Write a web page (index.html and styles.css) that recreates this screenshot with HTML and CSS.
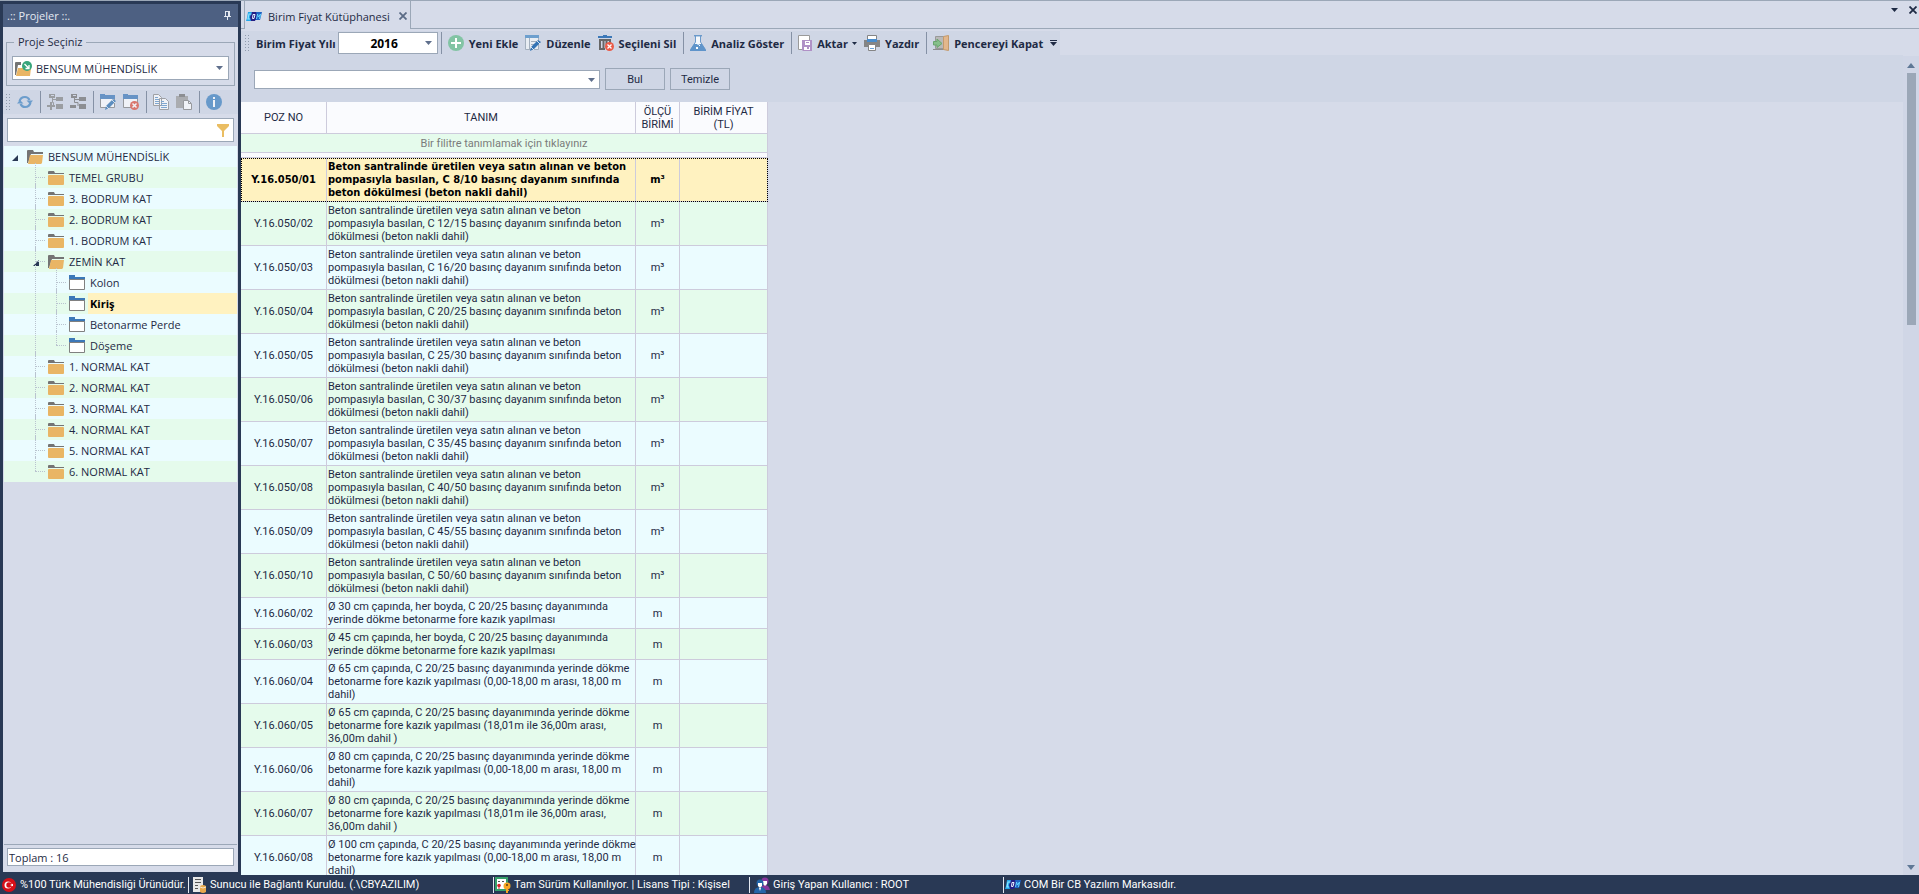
FILE: index.html
```html
<!DOCTYPE html>
<html lang="tr">
<head>
<meta charset="utf-8">
<title>Birim Fiyat Kütüphanesi</title>
<link rel="stylesheet" href="styles.css">
</head>
<body>
<svg class="defs" aria-hidden="true">
  <symbol id="folder" viewBox="0 0 16 14"><path fill="#747474" d="M0 1q0-1 1-1h5l1 2h9v1H0z"/><rect y="4" width="16" height="10" rx="1" fill="#e9b565"/></symbol>
  <symbol id="folder-open" viewBox="0 0 16 14"><path fill="#747474" d="M0 1q0-1 1-1h5l1 2h9v2H4L1 13H0z"/><path fill="#e9b565" d="M3 5h13l-1 8-1 1H1z"/></symbol>
  <symbol id="folder-blue" viewBox="0 0 16 15"><path fill="#3c78b8" d="M0 0h6v2h10v3H0z"/><path fill="#fff" stroke="#808080" d="M.5 4.500h15v10H.5z"/><path fill="#3c78b8" d="M0 2h16v2H0z"/></symbol>
  <symbol id="caret" viewBox="0 0 7 4"><path fill="currentColor" d="M0 0h7L3.500 4z"/></symbol>
  <symbol id="expanded" viewBox="0 0 6 6"><path fill="#293955" d="M6 0v6H0z"/></symbol>
  <symbol id="logo" viewBox="0 0 16 11"><path fill="#22a7ea" d="M2 1h5L5 10H0l1-3z"/><path fill="#1f63c4" d="M9 1h7l-2 8H8z"/><path fill="#241f86" d="M6 1h4l1 4-2 5H5L4 6z"/><path fill="none" stroke="#8fe6ff" stroke-width="1.200" d="M5.500 3H3L2 8h2"/><path fill="none" stroke="#e8f0ff" d="M7 3.500h2l-1 4H6.500z"/><path fill="none" stroke="#5fd4ff" d="M10.500 8l1-5 1 3 2-3-1 5"/></symbol>
</svg>
<div class="app">
  <aside class="sidebar">
    <header class="panel-title"><span>.:: Projeler ::.</span>
      <svg width="7" height="9" viewBox="0 0 7 9"><path fill="#e4e9f2" d="M1 0h5v5h1v1H4v3H3V6H0V5h1zM2 1v4h2V1z"/></svg>
    </header>
    <fieldset class="project-box">
      <legend><label for="project">Proje Seçiniz</label></legend>
      <div class="combo project-combo">
        <svg width="17" height="15" viewBox="0 0 17 15"><path fill="#747474" d="M0 2q0-1 1-1h5v3H3L1 14H0z"/><path fill="#e9b565" d="M3 7h13l-1 8H1z"/><circle cx="12" cy="5" r="5" fill="#38a57b"/><path fill="none" stroke="#fff" stroke-width="1.300" d="M9.500 3l4 4M14 4v3.500h-3.500"/></svg>
        <select id="project"><option>BENSUM MÜHENDİSLİK</option></select>
        <svg class="arrow" width="7" height="4"><use href="#caret"/></svg>
      </div>
    </fieldset>
    <div class="tree-tools">
      <i class="grip"></i>
      <button type="button" class="dim" aria-label="Yenile"><svg width="16" height="14" viewBox="0 0 16 14"><path fill="none" stroke="#4385c2" stroke-width="2.200" d="M2.500 6.500Q3.500 2 8 2q3 0 4.500 3M13.500 7.500Q12.500 12 8 12q-3 0-4.500-3"/><path fill="#4385c2" d="M9.500 5.500H16L13 9zM0 8.500h6.500L3 5z"/></svg></button>
      <i class="sep"></i>
      <button type="button" class="dim" aria-label="Alt grup ekle"><svg width="16" height="16" viewBox="0 0 16 16"><path fill="#858585" d="M2 0h6v4H2zM9 3h7v4H9zM9 10h7v5H9zM3 8h2v3h3v2H5v3H3v-3H0v-2h3z"/><path fill="none" stroke="#858585" d="M5.500 4v4.500h1V12M6 5.500h3"/><path fill="#cfd6e5" d="M4 1h3v1H4z"/></svg></button>
      <button type="button" class="dim" aria-label="Alt grup sil"><svg width="16" height="16" viewBox="0 0 16 16"><path fill="#707070" d="M1 0h6v4H1zM9 3h7v4H9zM9 10h7v5H9zM0 11h6v3H0z"/><path fill="none" stroke="#707070" d="M4.500 4v4.500H8V12M5 5.500h4"/><path fill="#cfd6e5" d="M3 1h3v1H3z"/></svg></button>
      <i class="sep"></i>
      <button type="button" class="dim" aria-label="Düzenle"><svg width="16" height="16" viewBox="0 0 16 16"><path fill="#fff" stroke="#808080" d="M.5 4.500h14v9H.5z"/><path fill="#3c78b8" d="M0 0h5v1h10v4H0z"/><path fill="#2d70b0" d="M5 16l1-4 7-7 3 2-7 7z"/><path stroke="#fff" stroke-width=".8" d="M12 6l3 3M6 12l3 3"/></svg></button>
      <button type="button" class="dim" aria-label="Sil"><svg width="16" height="16" viewBox="0 0 16 16"><path fill="#fff" stroke="#808080" d="M.5 4.500h14v9H.5z"/><path fill="#3c78b8" d="M0 0h5v1h10v4H0z"/><circle cx="11.500" cy="11.500" r="4.500" fill="#de4f3c"/><path stroke="#fff" stroke-width="1.500" d="M9.500 9.500l4 4m0-4l-4 4"/></svg></button>
      <i class="sep"></i>
      <button type="button" class="dim" aria-label="Kopyala"><svg width="16" height="16" viewBox="0 0 16 16"><path fill="#fff" stroke="#8a8a8a" d="M.5.500h5l3 3v8h-8zM6.500 4.500h6l3 3v8h-9z"/><path stroke="#5d93c6" d="M2 3.500h3M2 5.500h4M2 7.500h4M2 9.500h4M8 7.500h3M8 9.500h6M8 11.500h6M8 13.500h6"/></svg></button>
      <button type="button" class="dim" aria-label="Yapıştır"><svg width="16" height="16" viewBox="0 0 16 16"><path fill="#9b9b9b" d="M0 2h12v12H0z"/><path fill="#707070" d="M3 0h6v3H3z"/><path fill="#fff" stroke="#808080" d="M7.500 6.500h5l3 3v6h-8z"/><path fill="none" stroke="#808080" d="M12.500 7v2.500H15"/></svg></button>
      <i class="sep"></i>
      <button type="button" class="dim" aria-label="Bilgi"><svg width="16" height="16" viewBox="0 0 16 16"><circle cx="8" cy="8" r="8" fill="#3c80bf"/><path fill="#fff" d="M7 3h2v2H7zM7 6h2v7H7z"/></svg></button>
    </div>
    <div class="combo search"><input type="text" aria-label="Ara">
      <svg width="12" height="13" viewBox="0 0 12 13"><path fill="#eabd62" d="M0 0h12v2L7 7v6H5V7L0 2z"/></svg></div>
    <ul class="tree">
      <li><div class="node"><svg class="exp" width="6" height="6"><use href="#expanded"/></svg><svg width="16" height="14"><use href="#folder-open"/></svg><span>BENSUM MÜHENDİSLİK</span></div>
      <ul>
        <li><div class="node"><svg width="16" height="14"><use href="#folder"/></svg><span>TEMEL GRUBU</span></div></li>
        <li><div class="node"><svg width="16" height="14"><use href="#folder"/></svg><span>3. BODRUM KAT</span></div></li>
        <li><div class="node"><svg width="16" height="14"><use href="#folder"/></svg><span>2. BODRUM KAT</span></div></li>
        <li><div class="node"><svg width="16" height="14"><use href="#folder"/></svg><span>1. BODRUM KAT</span></div></li>
        <li><div class="node"><svg class="exp" width="6" height="6"><use href="#expanded"/></svg><svg width="16" height="14"><use href="#folder-open"/></svg><span>ZEMİN KAT</span></div>
        <ul>
          <li><div class="node"><svg width="16" height="15"><use href="#folder-blue"/></svg><span>Kolon</span></div></li>
          <li><div class="node"><svg width="16" height="15"><use href="#folder-blue"/></svg><span class="current">Kiriş</span></div></li>
          <li><div class="node"><svg width="16" height="15"><use href="#folder-blue"/></svg><span>Betonarme Perde</span></div></li>
          <li><div class="node"><svg width="16" height="15"><use href="#folder-blue"/></svg><span>Döşeme</span></div></li>
        </ul></li>
        <li><div class="node"><svg width="16" height="14"><use href="#folder"/></svg><span>1. NORMAL KAT</span></div></li>
        <li><div class="node"><svg width="16" height="14"><use href="#folder"/></svg><span>2. NORMAL KAT</span></div></li>
        <li><div class="node"><svg width="16" height="14"><use href="#folder"/></svg><span>3. NORMAL KAT</span></div></li>
        <li><div class="node"><svg width="16" height="14"><use href="#folder"/></svg><span>4. NORMAL KAT</span></div></li>
        <li><div class="node"><svg width="16" height="14"><use href="#folder"/></svg><span>5. NORMAL KAT</span></div></li>
        <li><div class="node"><svg width="16" height="14"><use href="#folder"/></svg><span>6. NORMAL KAT</span></div></li>
      </ul></li>
    </ul>
    <div class="total"><input type="text" readonly value="Toplam : 16" aria-label="Toplam"></div>
  </aside>

  <main class="main">
    <div class="tabs">
      <div class="tab"><svg width="16" height="11"><use href="#logo"/></svg><span>Birim Fiyat Kütüphanesi</span>
        <button type="button" aria-label="Sekmeyi kapat"><svg width="8" height="8" viewBox="0 0 8 8"><path stroke="#5b6b86" stroke-width="1.800" d="M.5.500l7 7m0-7l-7 7"/></svg></button></div>
      <div class="tab-tools">
        <button type="button" aria-label="Sekmeler"><svg width="7" height="4"><use href="#caret"/></svg></button>
        <button type="button" aria-label="Kapat"><svg width="8" height="8" viewBox="0 0 8 8"><path stroke="currentColor" stroke-width="1.800" d="M.5.500l7 7m0-7l-7 7"/></svg></button>
      </div>
    </div>
    <div class="workspace">
      <div class="content">
        <div class="toolbar">
          <i class="grip"></i>
          <label for="year">Birim Fiyat Yılı</label>
          <div class="combo year"><select id="year"><option>2016</option></select><svg class="arrow" width="7" height="4"><use href="#caret"/></svg></div>
          <i class="sep"></i>
          <button type="button"><svg width="16" height="16" viewBox="0 0 16 16"><circle cx="8" cy="8" r="8" fill="#82c4a4"/><path fill="#fff" d="M7 3h2v4h4v2H9v4H7V9H3V7h4z"/></svg>Yeni Ekle</button>
          <button type="button"><svg width="16" height="16" viewBox="0 0 16 16"><path fill="#e8edf3" stroke="#a3afbd" d="M.5.500h13v14H.5z"/><path fill="#6d9fce" d="M0 0h14v3H0z"/><path stroke="#a3afbd" d="M4.500 3v11M6 6.500h7M6 9.500h4"/><path fill="#3474b5" d="M5 16l1-4 7-7 3 2-7 7z"/><path stroke="#fff" stroke-width=".8" d="M12 6l3 3M6 12l3 3"/></svg>Düzenle</button>
          <button type="button"><svg width="16" height="16" viewBox="0 0 16 16"><path fill="#3c78b8" d="M5 0h4v1h5v2H0V1h5z"/><path fill="none" stroke="#666" stroke-width="2" d="M12 8V5H2v9h5M5.500 6v7M8.500 6v4"/><circle cx="11.500" cy="11.500" r="4.500" fill="#ea5a46"/><path stroke="#fff" stroke-width="1.300" d="M9.500 9.500l4 4m0-4l-4 4"/></svg>Seçileni Sil</button>
          <i class="sep"></i>
          <button type="button"><svg width="16" height="16" viewBox="0 0 16 16"><path fill="#f5f8fc" stroke="#6b9acb" d="M5.500 1v6L1 14v1.500h14V14l-4.500-7V1"/><path stroke="#6b9acb" stroke-width="1.500" d="M4 .7h8"/><path fill="#5f94ca" d="M4 9h3l1 1 2-1h2l4 6v1H0v-1z"/><path fill="#fff" d="M6 12h2v2H6zM9 10h1v1H9z"/></svg>Analiz Göster</button>
          <i class="sep"></i>
          <button type="button"><svg width="14" height="16" viewBox="0 0 14 16"><path fill="#fff" stroke="#9a9a9a" d="M.5.500h11v14H.5z"/><path fill="#b091c6" d="M4 5h10v11H5l-1-1z"/><path fill="#fff" d="M7 6h5v4H7zM6 12h6v3H6z"/><path fill="#b091c6" d="M8 7h3v1H8zM9 12h2v2H9z"/></svg>Aktar<svg class="mini" width="5" height="3"><use href="#caret"/></svg></button>
          <button type="button"><svg width="16" height="16" viewBox="0 0 16 16"><path fill="#fff" stroke="#858585" d="M3.500.500h9v6h-9z"/><path fill="#858585" d="M0 5h16v7H0z"/><path fill="#4a8ccb" d="M3 4h10v3H3z"/><path fill="#fff" stroke="#858585" d="M4.500 9.500h7v6h-7z"/><path stroke="#6ba3d8" d="M6 13.500h4"/></svg>Yazdır</button>
          <i class="sep"></i>
          <button type="button"><svg width="16" height="16" viewBox="0 0 16 16"><path fill="#b9b9b9" stroke="#999" d="M2.500 1.500h8v12h-8z"/><path fill="#8d8d8d" d="M0 14h11v1H0z"/><path fill="#e3b78c" stroke="#c39a6c" d="M10.500 1.500l5-1v15l-5-1z"/><path fill="#86c08a" stroke="#6aa56e" d="M.5 6.500H4V4l5 4.500-5 4v-2.500H.5z"/></svg>Pencereyi Kapat</button>
          <button type="button" class="more" aria-label="Diğer"><svg width="7" height="6" viewBox="0 0 7 6"><path fill="currentColor" d="M0 0h7v1H0zM0 2h7L3.500 6z"/></svg></button>
        </div>
        <form class="finder">
          <div class="combo find"><input type="text" aria-label="Aranacak metin"><svg class="arrow" width="7" height="4"><use href="#caret"/></svg></div>
          <button type="button">Bul</button>
          <button type="button">Temizle</button>
        </form>
        <div class="grid-area">
        <table class="grid">
          <colgroup><col class="c-no"><col class="c-desc"><col class="c-unit"><col class="c-price"></colgroup>
          <thead>
            <tr><th>POZ NO</th><th>TANIM</th><th>ÖLÇÜ<br>BİRİMİ</th><th>BİRİM FİYAT<br>(TL)</th></tr>
            <tr class="filter"><td colspan="4">Bir filitre tanımlamak için tıklayınız</td></tr>
            <tr class="gap"><td colspan="4"></td></tr>
          </thead>
          <tbody>
            <tr class="selected"><td>Y.16.050/01</td><td>Beton santralinde üretilen veya satın alınan ve beton<br>pompasıyla basılan, C 8/10 basınç dayanım sınıfında<br>beton dökülmesi (beton nakli dahil)</td><td>m³</td><td></td></tr>
            <tr><td>Y.16.050/02</td><td>Beton santralinde üretilen veya satın alınan ve beton<br>pompasıyla basılan, C 12/15 basınç dayanım sınıfında beton<br>dökülmesi (beton nakli dahil)</td><td>m³</td><td></td></tr>
            <tr><td>Y.16.050/03</td><td>Beton santralinde üretilen veya satın alınan ve beton<br>pompasıyla basılan, C 16/20 basınç dayanım sınıfında beton<br>dökülmesi (beton nakli dahil)</td><td>m³</td><td></td></tr>
            <tr><td>Y.16.050/04</td><td>Beton santralinde üretilen veya satın alınan ve beton<br>pompasıyla basılan, C 20/25 basınç dayanım sınıfında beton<br>dökülmesi (beton nakli dahil)</td><td>m³</td><td></td></tr>
            <tr><td>Y.16.050/05</td><td>Beton santralinde üretilen veya satın alınan ve beton<br>pompasıyla basılan, C 25/30 basınç dayanım sınıfında beton<br>dökülmesi (beton nakli dahil)</td><td>m³</td><td></td></tr>
            <tr><td>Y.16.050/06</td><td>Beton santralinde üretilen veya satın alınan ve beton<br>pompasıyla basılan, C 30/37 basınç dayanım sınıfında beton<br>dökülmesi (beton nakli dahil)</td><td>m³</td><td></td></tr>
            <tr><td>Y.16.050/07</td><td>Beton santralinde üretilen veya satın alınan ve beton<br>pompasıyla basılan, C 35/45 basınç dayanım sınıfında beton<br>dökülmesi (beton nakli dahil)</td><td>m³</td><td></td></tr>
            <tr><td>Y.16.050/08</td><td>Beton santralinde üretilen veya satın alınan ve beton<br>pompasıyla basılan, C 40/50 basınç dayanım sınıfında beton<br>dökülmesi (beton nakli dahil)</td><td>m³</td><td></td></tr>
            <tr><td>Y.16.050/09</td><td>Beton santralinde üretilen veya satın alınan ve beton<br>pompasıyla basılan, C 45/55 basınç dayanım sınıfında beton<br>dökülmesi (beton nakli dahil)</td><td>m³</td><td></td></tr>
            <tr><td>Y.16.050/10</td><td>Beton santralinde üretilen veya satın alınan ve beton<br>pompasıyla basılan, C 50/60 basınç dayanım sınıfında beton<br>dökülmesi (beton nakli dahil)</td><td>m³</td><td></td></tr>
            <tr><td>Y.16.060/02</td><td>Ø 30 cm çapında, her boyda, C 20/25 basınç dayanımında<br>yerinde dökme betonarme fore kazık yapılması</td><td>m</td><td></td></tr>
            <tr><td>Y.16.060/03</td><td>Ø 45 cm çapında, her boyda, C 20/25 basınç dayanımında<br>yerinde dökme betonarme fore kazık yapılması</td><td>m</td><td></td></tr>
            <tr><td>Y.16.060/04</td><td>Ø 65 cm çapında, C 20/25 basınç dayanımında yerinde dökme<br>betonarme fore kazık yapılması (0,00-18,00 m arası, 18,00 m<br>dahil)</td><td>m</td><td></td></tr>
            <tr><td>Y.16.060/05</td><td>Ø 65 cm çapında, C 20/25 basınç dayanımında yerinde dökme<br>betonarme fore kazık yapılması (18,01m ile 36,00m arası,<br>36,00m dahil )</td><td>m</td><td></td></tr>
            <tr><td>Y.16.060/06</td><td>Ø 80 cm çapında, C 20/25 basınç dayanımında yerinde dökme<br>betonarme fore kazık yapılması (0,00-18,00 m arası, 18,00 m<br>dahil)</td><td>m</td><td></td></tr>
            <tr><td>Y.16.060/07</td><td>Ø 80 cm çapında, C 20/25 basınç dayanımında yerinde dökme<br>betonarme fore kazık yapılması (18,01m ile 36,00m arası,<br>36,00m dahil )</td><td>m</td><td></td></tr>
            <tr><td>Y.16.060/08</td><td>Ø 100 cm çapında, C 20/25 basınç dayanımında yerinde dökme<br>betonarme fore kazık yapılması (0,00-18,00 m arası, 18,00 m<br>dahil)</td><td>m</td><td></td></tr>
          </tbody>
        </table>
        </div>
      </div>
      <div class="scrollbar">
        <svg width="8" height="5" viewBox="0 0 8 5"><path fill="#5f7896" d="M0 5h8L4 0z"/></svg>
        <div class="track"><div class="thumb"></div></div>
        <svg width="8" height="5" viewBox="0 0 8 5"><path fill="#5f7896" d="M0 0h8L4 5z"/></svg>
      </div>
    </div>
  </main>

  <footer class="status">
    <div class="s1"><svg width="14" height="14" viewBox="0 0 14 14"><circle cx="7" cy="7" r="7" fill="#d80f18"/><circle cx="6" cy="7" r="3.500" fill="#fff"/><circle cx="7" cy="7" r="2.700" fill="#d80f18"/><path fill="#fff" d="M8 7l3-1.200v2.400z"/></svg>%100 Türk Mühendisliği Ürünüdür.</div>
    <div class="s2"><svg width="14" height="16" viewBox="0 0 14 16"><path fill="#e8e8e8" d="M0 0h10v15H0z"/><path stroke="#555" d="M2 2.500h6M2 5.500h6M2 8.500h3M2 11.500h3"/><path fill="#e9a94c" d="M7 9q3-2 6 0v6q-3 2-6 0z"/><path fill="none" stroke="#fff" stroke-width=".7" d="M7 10q3 2 6 0"/></svg>Sunucu ile Bağlantı Kuruldu. (.\CBYAZILIM)</div>
    <div class="s3"><svg width="16" height="16" viewBox="0 0 16 16"><path fill="#fff" stroke="#35a06b" stroke-width="2" d="M1 1h11v12H1z"/><path stroke="#555" d="M3 4.500h2M7 4.500h2"/><circle cx="4" cy="8.500" r="1.800" fill="#d3222a"/><path stroke="#d3222a" d="M4 9v3"/><circle cx="12" cy="9" r="3.500" fill="#f6a623"/><path fill="#f6a623" d="M11 11h2v5h-2zM13 13h1v1h-1z"/><circle cx="12" cy="8" r="1" fill="#5b3d10"/></svg>Tam Sürüm Kullanılıyor. | Lisans Tipi : Kişisel</div>
    <div class="s4"><svg width="16" height="16" viewBox="0 0 16 16"><circle cx="11" cy="4" r="3.500" fill="#87379c"/><path fill="#87379c" d="M7 13q0-5 4-5t5 5z"/><path fill="#fff" d="M9 4h4v3l-2 2-2-2z"/><circle cx="6" cy="6" r="3.500" fill="#2465a8"/><path fill="#2465a8" d="M0 16q0-6 6-6t6 6z"/><path fill="#fff" d="M4 6h4v3l-2 2-2-2zM5 11h2l-1 3z"/></svg>Giriş Yapan Kullanıcı : ROOT</div>
    <div class="s5"><svg width="16" height="11"><use href="#logo"/></svg>COM Bir CB Yazılım Markasıdır.</div>
  </footer>
</div>
</body>
</html>
```

FILE: styles.css
```css
* { box-sizing: border-box; }
html, body { height: 100%; margin: 0; }
body { font: 11px "Open Sans", sans-serif; color: #1e2a44; }
button, input, select { font: inherit; color: inherit; border: 0; padding: 0; background: none; }
svg { flex: none; display: block; }
.defs { display: none; }

.app {
  height: 100vh;
  display: grid;
  grid-template: 1fr 19px / 241px 1fr;
  background: #293955;
  border-top: 1px solid #9ba7b7;
  overflow: hidden;
}

/* project panel */
.sidebar {
  margin: 3px 3px 3px 3px;
  background: #d6dbe9;
  display: flex;
  flex-direction: column;
  min-height: 0;
}
.panel-title {
  height: 23px;
  padding: 0 7px 0 4px;
  background: #4d6082;
  color: #e4e9f2;
  display: flex;
  align-items: center;
  justify-content: space-between;
}
.project-box {
  margin: 7px 3px 4px;
  padding: 6px 5px 5px;
  border: 1px solid #9ba7b7;
  min-width: 0;
}
.project-box legend { margin-left: 2px; padding: 0 4px; line-height: 16px; }
.combo {
  display: flex;
  align-items: center;
  background: #fff;
  border: 1px solid #9ba7b7;
}
.combo select, .combo input { flex: 1; min-width: 0; height: 100%; appearance: none; outline: 0; }
.arrow { color: #5f6f8c; pointer-events: none; }
.project-combo { height: 24px; padding: 0 5px 0 2px; gap: 4px; }

.grip {
  width: 5px;
  height: 18px;
  background: radial-gradient(#8f9bad 1px, transparent 1px) 0 0 / 3px 3px;
}
.sep { width: 1px; height: 22px; margin-right: -1px; background: #8591a5; }
.tree-tools {
  height: 24px;
  padding-left: 2px;
  background: #cfd6e5;
  display: flex;
  align-items: center;
  gap: 7px;
}
.tree-tools .dim { opacity: .7; }
.search { height: 24px; margin: 4px 4px 4px; padding-right: 4px; }

.tree, .tree ul { list-style: none; margin: 0; padding: 0; }
.tree {
  flex: 1;
  margin: 0 1px;
  line-height: 21px;
}
.tree > li {
  background: repeating-linear-gradient(#ebfcff 0 21px, #e5fbec 21px 42px);
  padding-left: 8px;
}
.tree li { position: relative; }
.tree ul { padding-left: 21px; }
.node { height: 21px; display: flex; align-items: center; padding-left: 15px; gap: 5px; }
.node .exp { margin: 2px 4px 0 -15px; }
.node .current { flex: 1; background: #fff2c0; font-weight: bold; color: #000; margin-left: -2px; padding-left: 2px; }
.tree ul > li::before {
  content: "";
  position: absolute;
  left: 2px;
  top: 10px;
  width: 10px;
  border-top: 1px dotted #b9c3cf;
}
.tree ul > li::after {
  content: "";
  position: absolute;
  left: 2px;
  top: -4px;
  bottom: 0;
  border-left: 1px dotted #b9c3cf;
}
.tree ul > li:last-child::after { bottom: auto; height: 14px; }
.total { margin: 0 1px; padding: 3px 3px 6px; border-top: 1px solid #9ba7b7; }
.total input { display: block; width: 100%; height: 18px; border: 1px solid #9ba7b7; background: #fff; padding: 0 1px; }

/* document area */
.main { display: flex; flex-direction: column; min-width: 0; min-height: 0; background: #d6dbe9; }
.tabs { height: 28px; display: flex; justify-content: space-between; border-bottom: 1px solid #9ba7b7; padding-left: 3px; }
.tab {
  height: 28px;
  padding: 2px 3px 0 1px;
  border: 1px solid #9ba7b7;
  border-width: 0 1px;
  background: #d6dbe9;
  display: flex;
  align-items: center;
  gap: 6px;
  white-space: nowrap;
}
.tab button { padding: 0 0 0 3px; }
.tab-tools { display: flex; gap: 11px; padding: 5px 2px 0 0; align-items: flex-start; }
.tab-tools button { height: 8px; display: flex; align-items: center; }
.workspace { flex: 1; min-height: 0; display: flex; }
.content { flex: 1; min-width: 0; display: flex; flex-direction: column; }
.toolbar {
  align-self: flex-start;
  height: 24px;
  margin-top: 2px;
  padding: 0 3px;
  background: #cfd6e5;
  display: flex;
  align-items: center;
  font-weight: bold;
  white-space: nowrap;
  gap: 7px;
}
.toolbar button { display: flex; align-items: center; gap: 5px; }
.toolbar .mini { margin-left: -1px; }
.toolbar .year { width: 100px; height: 22px; margin: 0 -4px 0 -5px; padding: 0 5px; font-size: 12px; }
.year select { text-align: center; text-align-last: center; font-weight: bold; color: #000; }
.finder {
  height: 47px;
  padding: 13px 0 0 13px;
  background: #cfd6e5;
  display: flex;
  align-items: flex-start;
  gap: 5px;
  font-family: Roboto, sans-serif;
}
.find { width: 346px; height: 19px; margin-top: 2px; padding: 0 4px; }
.finder button { width: 60px; height: 22px; border: 1px solid #9ba7b7; }

.grid-area { flex: 1; min-height: 0; overflow: hidden; }
.grid {
  width: 527px;
  table-layout: fixed;
  border-spacing: 0;
  font-family: Roboto, sans-serif;
  line-height: 13px;
}
.c-no { width: 86px; }
.c-desc { width: 309px; }
.c-unit { width: 44px; }
.c-price { width: 88px; }
.grid th, .grid td {
  padding: 2px 1px;
  border: solid #cdcbdc;
  border-width: 0 1px 1px 0;
  text-align: center;
  font-weight: normal;
  white-space: nowrap;
}
.grid th { height: 32px; background: #fafbfe; }
.grid tbody td:nth-child(2) { text-align: left; }
.grid tbody tr { background: #e5fbec; }
.grid tbody tr:nth-child(odd) { background: #ebfcff; }
.grid .filter td { height: 19px; background: #e5fbec; color: #7b7b7b; }
.grid .gap td { height: 5px; padding: 0; background: #fafbfe; }
.grid tbody tr.selected:first-child { background: #fff2c0; outline: 1px dotted #000; outline-offset: -1px; color: #000; }
.grid tbody .selected td { font-family: "DejaVu Sans Condensed", sans-serif; font-weight: bold; }

.scrollbar {
  width: 16px;
  margin-top: 27px;
  padding: 7px 0 5px;
  background: #d0d6e6;
  display: flex;
  flex-direction: column;
  align-items: center;
  gap: 5px;
}
.track { flex: 1; align-self: stretch; padding: 0 3px 0 4px; }
.thumb { height: 32%; background: #9ba7b7; }

.status {
  grid-column: 1 / -1;
  color: #fff;
  display: flex;
  align-items: center;
  white-space: nowrap;
  overflow: hidden;
  font-family: Roboto, sans-serif;
}
.status div { height: 16px; display: flex; align-items: center; gap: 3px; padding-left: 4px; }
.status div + div { border-left: 1px solid #e4e9f2; }
.status .s1 { width: 188px; padding-left: 2px; gap: 4px; }
.status .s2 { width: 305px; }
.status .s3 { width: 256px; padding-left: 1px; }
.status .s4 { width: 254px; }
.status .s5 { padding-left: 1px; }
```
